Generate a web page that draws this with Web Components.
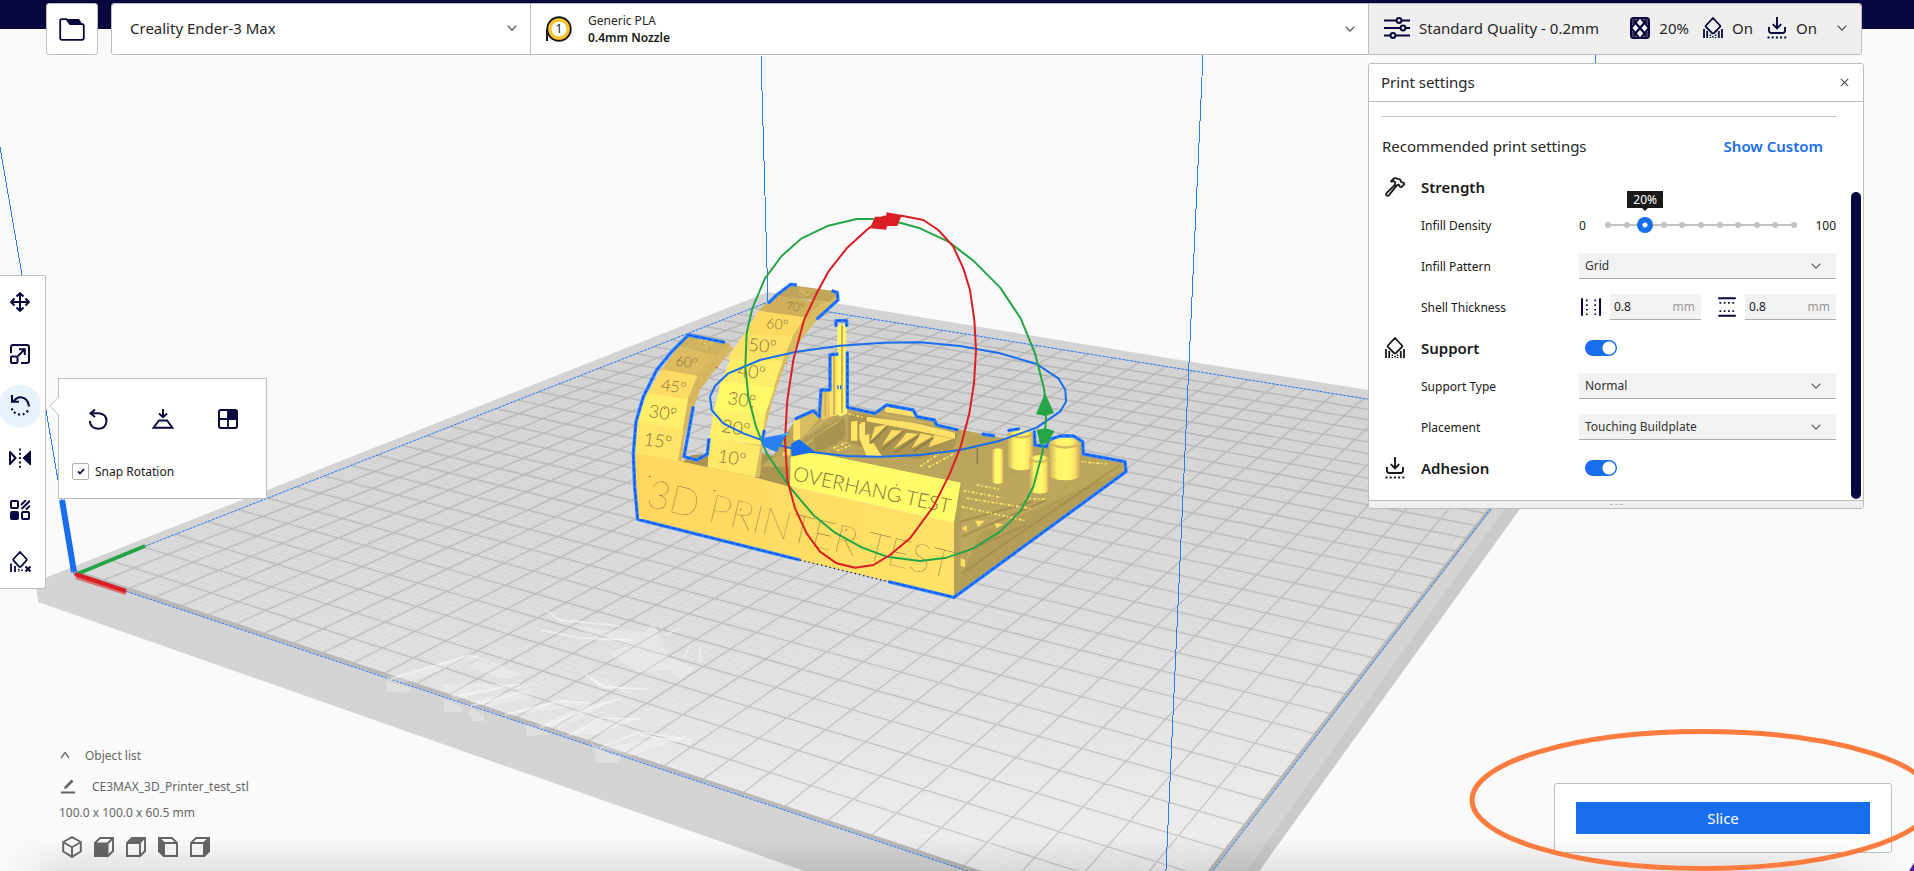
<!DOCTYPE html>
<html lang="en">
<head>
<meta charset="utf-8">
<title>Print preparation</title>
<style>
  html, body { margin: 0; height: 100%; }
  body {
    font: 12px/17px "Noto Sans", "Open Sans", sans-serif;
    color: #191919;
    background: #fafafa;
    --navy: #08073f;
    --blue: #196ef0;
    --line: #bdbdbd;
    --field: #f2f2f2;
  }
</style>
</head>
<body>
<slicer-app></slicer-app>

<script>
const define = (name, html, setup) => {
  const template = document.createElement('template');
  template.innerHTML = html;
  customElements.define(name, class extends HTMLElement {
    constructor() {
      super();
      this.attachShadow({ mode: 'open' }).append(template.content.cloneNode(true));
    }
    connectedCallback() { if (setup) setup.call(this, this.shadowRoot); }
  });
};

/* ---------- icons: [viewBox width, viewBox height, markup] ---------- */
const supportIcon = `<path d="M10 1 L17 8.5 Q17.6 9.3 17 10 L11 16 Q10 16.8 9 16 L3 10 Q2.4 9.3 3 8.5Z" stroke-width="1.8"/><path d="M1 12V21M4.200 14V21M15.800 14V21M19 12V21" stroke-width="1.8"/><path d="M7.400 17.500V21M10 19V21M12.600 17.500V21" stroke-width="1.600" stroke-dasharray="1.500 1"/>`;
const ICONS = {
  chevron: [10, 6, `<path d="M.7.7 5 5.200 9.300.7" stroke-width="1.100"/>`],
  up: [10, 8, `<path d="M1 7 5 1.500 9 7" stroke-width="1.300"/>`],
  close: [9, 9, `<path d="M.8.8l7.400 7.400M8.200.8.8 8.200" stroke-width="1.200"/>`],
  folder: [26, 23, `<path d="M1.200 20V3Q1.200 1.200 3 1.200H7.500L11 6H22.500Q24.800 6 24.800 8.200V19.800Q24.800 21.800 22.800 21.800H3.200Q1.200 21.800 1.200 20Z" stroke-width="1.800"/><path d="M8 1.500H20L22.500 5.800H11.500Z" fill="currentColor" stroke-width="1"/>`],
  spool: [26, 26, `<path d="M1 25V13" stroke="#191919" stroke-width="2"/><circle cx="13" cy="13" r="10.400" stroke="#191919" stroke-width="4.600" fill="#fff"/><circle cx="13" cy="13" r="9.200" stroke="#fdc52b" stroke-width="3.200"/>`],
  sliders: [26, 22, `<g stroke-width="2"><path d="M0 3.500H12M18 3.500H26M0 11H16M22 11H26M0 18.500H6M12 18.500H26"/><circle cx="15" cy="3.500" r="2.400"/><circle cx="19" cy="11" r="2.400"/><circle cx="9" cy="18.500" r="2.400"/></g>`],
  infill: [20, 22, `<rect x="1" y="1" width="18" height="20" rx="2.500" stroke-width="2"/><path d="M4 4 16 18M16 4 4 18M10 0 1 11 10 22M10 0 19 11 10 22" stroke-width="2.200"/><path d="M1 1h5v4l-5 3zM19 1h-5v4l5 3zM1 21h5v-4l-5-3zM19 21h-5v-4l5-3z" fill="currentColor" fill-opacity=".75" stroke="none"/>`],
  support: [20, 22, supportIcon],
  adhesion: [20, 22, `<g stroke-width="1.900"><path d="M10 0V11M5.800 7.200 10 11.400 14.200 7.200"/><path d="M2 10V13.500Q2 16 4.500 16H15.500Q18 16 18 13.500V10"/></g><path d="M.5 20.500H20" stroke-width="1.800" stroke-dasharray="2 2.200"/>`],
  hammer: [20, 20, `<g stroke-width="1.800" stroke-linejoin="round"><path d="M6 4.500Q8 1.300 10.200 1L15.200 2.600 16.200 5 19 6.200 19.100 7.600 16.400 10.200 15 9.800 13.600 7.600 11.800 8.400 3.800 18.400Q2.600 19.400 1.600 18.400 .6 17.300 1.500 16.200L9.900 7.800 10.200 5.200 8.600 4.200Z"/></g>`],
  walls: [20, 18, `<path d="M1 1V17M19 1V17" stroke-width="2" stroke-linecap="round"/><path d="M5.800 1.500V17M14.200 1.500V17" stroke-width="1.700" stroke-dasharray="1.700 3"/>`],
  topbottom: [18, 20, `<path d="M1 1.200H17M1 18.800H17" stroke-width="2" stroke-linecap="round"/><path d="M1.500 5.800H17M1.500 14.200H17" stroke-width="1.700" stroke-dasharray="1.700 2.600"/>`],
  move: [20, 20, `<g stroke-width="2"><path d="M10 1V19M1 10H19M6.500 4.500 10 1.200 13.500 4.500M6.500 15.500 10 18.800 13.500 15.500M4.500 6.500 1.200 10 4.500 13.500M15.500 6.500 18.800 10 15.500 13.500"/></g>`],
  scale: [20, 20, `<g stroke-width="2"><path d="M1 9V3Q1 1 3 1H17Q19 1 19 3V17Q19 19 17 19H11"/><rect x="1" y="12.500" width="6.500" height="6.500" rx="1"/><path d="M8 12 14.500 5.500M9 5.200H14.800V11"/></g>`],
  rotate: [20, 21, `<path d="M3.500 6.500Q6.500 2 11 2.200 18 3 19 11.500" stroke-width="2.100"/><path d="M2 0V6.800H9" stroke-width="2.100"/><path d="M18 15.500Q14 20.500 9 19.500 2.500 18.500 1 11" stroke-width="2.100" stroke-dasharray="2 2.600"/>`],
  mirror: [22, 20, `<path d="M1 4 6.500 10 1 16Z" stroke-width="2" stroke-linejoin="round"/><path d="M21.500 3V17L14 10Z" fill="currentColor" stroke="currentColor" stroke-width="1"/><path d="M11 .5V20" stroke-width="1.900" stroke-dasharray="2 2.300"/>`],
  mesh: [20, 20, `<g stroke-width="2"><rect x="1" y="1" width="7" height="7" rx="1"/><rect x="12" y="12" width="7" height="7" rx="1"/><rect x="1" y="12" width="7" height="7" rx="1" fill="currentColor"/><path d="M11 5 16 0M11.500 9 20 .8M16 9.500 20 5.600"/></g>`],
  blocker: [21, 21, `<path d="M10 1 16.500 8 Q17 8.800 16.500 9.400L11 15.500Q10 16.300 9 15.500L3.500 9.400Q3 8.800 3.500 8Z" stroke-width="1.800"/><path d="M1 12.500V21M5 15V21" stroke-width="1.800"/><path d="M8.800 18V21M12 18.500V21" stroke-width="1.700" stroke-dasharray="1.500 1"/><path d="M15.500 15.500 20.500 20.500M20.500 15.500 15.500 20.500" stroke-width="2.200"/>`],
  reset: [20, 21, `<g stroke-width="2"><path d="M1.800 4.200H11Q18.500 5 18.500 12 17.800 19.800 10 19.800 2.500 19.500 1.800 12"/><path d="M7 .6 2.600 4.300 7 8"/></g>`],
  flatten: [22, 20, `<g stroke-width="1.900"><path d="M11 0V8M7 4.500 11 8.300 15 4.500M7 11.500H15L20.500 18.800H1.500Z"/></g>`],
  face: [20, 20, `<rect x="1" y="1" width="18" height="18" rx="2" stroke-width="2"/><path d="M10 1V19M1 10H19" stroke-width="1.800"/><path d="M10 1H18L19 2V10H10Z" fill="currentColor"/>`],
  pencil: [16, 15, `<path d="M1 13.500H15" stroke-width="2"/><path d="M4 10 4.700 7.400 11.500.6 13.500 2.600 6.700 9.300Z" fill="currentColor" stroke="none"/>`],
  cube: [20, 22, `<path d="M10 1.200 18.800 6V15.500L10 20.800 1.200 15.500V6ZM1.500 6.300 10 11.200 18.500 6.300M10 11.200V20.500" stroke-width="1.900"/>`],
  front: [20, 20, `<path d="M1 6 6 1H19V14L14 19H1Z" stroke-width="1.900"/><path d="M1 6H14V19H1Z" fill="currentColor"/><path d="M14 6 19 1" stroke-width="1.900"/>`],
  top: [20, 20, `<path d="M1 6 6 1H19V14L14 19H1ZM14 6V19" stroke-width="1.900"/><path d="M1 6.500 6 1H19L14 6.500Z" fill="currentColor"/>`],
  left: [20, 20, `<path d="M1 1H14L19 6V19H6L1 14ZM6 6H19" stroke-width="1.900"/><path d="M1 1 6 6V19L1 14Z" fill="currentColor" stroke-width="1.900"/>`],
  right: [20, 20, `<path d="M1 6 6 1H19V14L14 19H1ZM1 6H14" stroke-width="1.900"/><path d="M14 6 19 1V14L14 19Z" fill="currentColor" stroke-width="1.900"/>`]
};

define('ui-icon', `<style>
  :host { display: inline-flex; flex: none; color: var(--navy); }
  svg { display: block; fill: none; stroke: currentColor; }
</style>`, function (root) {
  const [w, h, markup] = ICONS[this.getAttribute('name')];
  root.innerHTML += `<svg width="${w}" height="${h}" viewBox="0 0 ${w} ${h}" aria-hidden="true">${markup}</svg>`;
});

/* ---------- top bar ---------- */
define('top-bar', `<style>
  :host { display: flex; gap: 13px; padding: 3px 52px 0 46px; background: linear-gradient(var(--navy) 29px, transparent 29px); }
  button { font: inherit; color: inherit; box-sizing: border-box; margin: 0; cursor: pointer; text-align: left; }
  .open { width: 52px; height: 52px; padding: 0; display: grid; place-items: center; background: #fff; border: 1px solid var(--line); border-radius: 3px; }
  .bar { flex: 1; display: grid; grid-template-columns: minmax(0, 1fr) minmax(0, 2fr) 492px; height: 52px; box-sizing: border-box; border: 1px solid var(--line); border-radius: 3px; overflow: hidden; }
  .bar button { display: flex; align-items: center; background: #fff; border: 0; border-right: 1px solid var(--line); padding: 0 13px 2px 18px; font-size: 15px; line-height: 20px; color: #262626; }
  .bar .quality { background: #efefef; border-right: 0; padding: 0 14px 2px 15px; gap: 9px; }
  .bar .material { gap: 16px; padding-left: 15px; padding-bottom: 1px; }
  .material .lines { display: grid; font-size: 12px; line-height: 17px; }
  strong { font-weight: 600; color: #191919; }
  .grow { flex: 1; }
  .arrow { color: #444; }
  .spool { display: grid; place-items: center; font-size: 12px; line-height: 17px; color: #191919; }
  .spool > * { grid-area: 1 / 1; }
  .spool span { position: relative; }
  .stat { display: flex; align-items: center; gap: 9px; margin-right: 5px; }
  .stat.last { margin-right: 11px; }
</style>
<button class="open" aria-label="Open file"><ui-icon name="folder"></ui-icon></button>
<div class="bar">
  <button><span>Creality Ender-3 Max</span><span class="grow"></span><ui-icon class="arrow" name="chevron"></ui-icon></button>
  <button class="material">
    <span class="spool"><ui-icon name="spool"></ui-icon><span>1</span></span>
    <span class="lines"><span>Generic PLA</span><strong>0.4mm Nozzle</strong></span>
    <span class="grow"></span><ui-icon class="arrow" name="chevron"></ui-icon>
  </button>
  <button class="quality">
    <ui-icon name="sliders"></ui-icon><span>Standard Quality - 0.2mm</span><span class="grow"></span>
    <span class="stat"><ui-icon name="infill"></ui-icon>20%</span>
    <span class="stat"><ui-icon name="support"></ui-icon>On</span>
    <span class="stat last"><ui-icon name="adhesion"></ui-icon>On</span>
    <ui-icon class="arrow" name="chevron"></ui-icon>
  </button>
</div>`);

/* ---------- print settings panel ---------- */
define('setting-row', `<style>
  :host { display: grid; grid-template-columns: 39px 158px minmax(0, 1fr); align-items: center; height: 26px; margin-bottom: 15px; }
  :host([heading]) { margin-bottom: 12px; font-size: 15px; font-weight: 600; }
  .icon { padding-left: 3px; display: flex; }
</style><span class="icon"><slot name="icon"></slot></span><slot name="label"></slot><slot></slot>`);

define('print-panel', `<style>
  :host { display: block; box-sizing: border-box; width: 496px; background: #fff; border: 1px solid var(--line); border-radius: 3px; overflow: hidden; }
  header { display: flex; align-items: center; justify-content: space-between; box-sizing: border-box; height: 38px; padding: 0 14px 1px 12px; border-bottom: 1px solid var(--line); }
  h2, h3 { margin: 0; font-size: 15px; line-height: 20px; font-weight: 400; color: #262626; }
  button { border: 0; background: none; padding: 0; font: inherit; cursor: pointer; }
  .close ui-icon { color: #555; }
  .body { display: flex; }
  .content { flex: 1; min-width: 0; padding: 14px 15px 7px 13px; }
  .rule { height: 1px; background: var(--line); margin-bottom: 16px; }
  .intro { display: flex; justify-content: space-between; align-items: center; height: 26px; padding-right: 13px; margin-bottom: 15px; }
  .intro a { font-size: 15px; font-weight: 600; color: var(--blue); text-decoration: none; }
  .track { display: grid; width: 10px; padding: 90px 2px 1px 0; }
  .thumb { border-radius: 5px; background: var(--navy); }
  setting-row ui-icon[slot] { color: #191919; }
  .select { display: grid; align-items: center; }
  .select > * { grid-area: 1 / 1; }
  .select ui-icon { justify-self: end; margin-right: 15px; color: #555; pointer-events: none; }
  select { appearance: none; width: 100%; height: 26px; border: 0; border-bottom: 1px solid #adadad; border-radius: 0; background: var(--field); padding: 0 6px; font: inherit; color: #333; }
  .switch { appearance: none; width: 32px; height: 16px; margin: 0 0 0 6px; border-radius: 8px; background: radial-gradient(circle at 24px 8px, #fff 6px, transparent 7px) var(--blue); }
  .slider { display: grid; grid-template-columns: 21px minmax(0, 1fr) 34px; align-items: center; }
  .slider span:last-child { text-align: right; }
  .range { display: grid; align-items: center; position: relative; }
  .range > input, .range > .ticks { grid-area: 1 / 1; }
  .ticks { margin: 0 5px; display: flex; justify-content: space-between; background: linear-gradient(#c0c2c4, #c0c2c4) center / 100% 2px no-repeat; }
  .ticks i { width: 6px; height: 6px; border-radius: 3px; background: #c0c2c4; }
  .range input { appearance: none; margin: 0; width: 100%; height: 18px; background: none; }
  .range input::-webkit-slider-thumb { appearance: none; width: 16px; height: 16px; border-radius: 8px; background: radial-gradient(circle, #fff 2px, var(--blue) 3px); }
  output { position: absolute; left: calc(8px + (100% - 16px) * .2); bottom: 26px; translate: -50%; width: 36px; text-align: center; background: #191919; color: #fff; }
  output::after { content: ""; position: absolute; left: 15px; top: 100%; border: 3px solid transparent; border-top-color: #191919; }
  .shell { display: grid; grid-template-columns: 31px 91px 44px 91px; align-items: center; }
  .shell ui-icon { justify-self: end; margin-right: 9px; }
  .field { display: flex; align-items: center; box-sizing: border-box; height: 26px; background: var(--field); border-bottom: 1px solid #adadad; padding: 0 6px 0 4px; color: #999; }
  .field input { flex: 1; min-width: 0; border: 0; padding: 0; background: none; font: inherit; color: #191919; }
  footer { height: 7px; border-top: 1px solid var(--line); background: #efefef; display: flex; justify-content: center; align-items: center; gap: 2px; }
  footer i { width: 3px; height: 1px; background: #bbb; }
</style>
<header><h2>Print settings</h2><button class="close" aria-label="Close"><ui-icon name="close"></ui-icon></button></header>
<div class="body">
  <div class="content">
    <div class="rule"></div>
    <div class="intro"><h3>Recommended print settings</h3><a href="#custom">Show Custom</a></div>
    <setting-row heading><ui-icon slot="icon" name="hammer"></ui-icon><span slot="label">Strength</span></setting-row>
    <setting-row><label slot="label" for="density">Infill Density</label>
      <div class="slider"><span>0</span>
        <div class="range"><div class="ticks"><i></i><i></i><i></i><i></i><i></i><i></i><i></i><i></i><i></i><i></i><i></i></div>
          <input id="density" type="range" min="0" max="100" value="20"><output for="density">20%</output></div>
        <span>100</span></div></setting-row>
    <setting-row><label slot="label" for="pattern">Infill Pattern</label>
      <div class="select"><select id="pattern"><option>Grid</option></select><ui-icon name="chevron"></ui-icon></div></setting-row>
    <setting-row><label slot="label" for="wall">Shell Thickness</label>
      <div class="shell"><ui-icon name="walls"></ui-icon><div class="field"><input id="wall" value="0.8"><span>mm</span></div>
        <ui-icon name="topbottom"></ui-icon><div class="field"><input aria-label="Top and bottom thickness" value="0.8"><span>mm</span></div></div></setting-row>
    <setting-row heading><ui-icon slot="icon" name="support"></ui-icon><label slot="label" for="support">Support</label><input class="switch" id="support" type="checkbox" checked></setting-row>
    <setting-row><label slot="label" for="type">Support Type</label>
      <div class="select"><select id="type"><option>Normal</option></select><ui-icon name="chevron"></ui-icon></div></setting-row>
    <setting-row><label slot="label" for="placement">Placement</label>
      <div class="select"><select id="placement"><option>Touching Buildplate</option></select><ui-icon name="chevron"></ui-icon></div></setting-row>
    <setting-row heading><ui-icon slot="icon" name="adhesion"></ui-icon><label slot="label" for="adhesion">Adhesion</label><input class="switch" id="adhesion" type="checkbox" checked></setting-row>
  </div>
  <div class="track"><div class="thumb"></div></div>
</div>
<footer><i></i><i></i><i></i></footer>`);

/* ---------- left toolbar and rotate popover ---------- */
define('tool-bar', `<style>
  :host { display: flex; flex-direction: column; box-sizing: border-box; width: 46px; background: #fff; border: 1px solid var(--line); border-left: 0; border-radius: 0 3px 3px 0; padding-right: 5px; overflow: hidden; }
  button { height: 52px; padding: 0 0 1px; border: 0; background: none; display: grid; place-items: center; cursor: pointer; }
  button[aria-pressed=true] { background: radial-gradient(circle, #e6f2fc 21px, transparent 22px); }
</style>
<button aria-label="Move"><ui-icon name="move"></ui-icon></button>
<button aria-label="Scale"><ui-icon name="scale"></ui-icon></button>
<button aria-label="Rotate" aria-pressed="true"><ui-icon name="rotate"></ui-icon></button>
<button aria-label="Mirror"><ui-icon name="mirror"></ui-icon></button>
<button aria-label="Per model settings"><ui-icon name="mesh"></ui-icon></button>
<button aria-label="Support blocker"><ui-icon name="blocker"></ui-icon></button>`);

define('rotate-popover', `<style>
  :host { display: block; position: relative; box-sizing: border-box; width: 209px; height: 121px; padding: 29px 13px 0; background: #fff; border: 1px solid var(--line); }
  .arrow { position: absolute; left: -10px; top: 17px; }
  .tools { display: flex; justify-content: space-around; margin: 0 -7px; }
  .tools button { width: 22px; height: 22px; padding: 0; border: 0; background: none; display: grid; place-items: center; cursor: pointer; }
  label { display: flex; align-items: center; gap: 6px; margin-top: 33px; }
  .box { display: grid; place-items: center; width: 17px; height: 17px; }
  .box > * { grid-area: 1 / 1; }
  input { appearance: none; width: 17px; height: 17px; margin: 0; border: 1px solid #b0b0b0; border-radius: 2px; background: #fff; }
  svg { fill: none; pointer-events: none; }
</style>
<svg class="arrow" width="11" height="20" viewBox="0 0 11 20"><path d="M11 0 .8 10 11 20Z" fill="#fff"/><path d="M10 .5.8 10 10 19.500" stroke="#bdbdbd"/></svg>
<div class="tools">
  <button aria-label="Reset"><ui-icon name="reset"></ui-icon></button>
  <button aria-label="Lay flat"><ui-icon name="flatten"></ui-icon></button>
  <button aria-label="Select face"><ui-icon name="face"></ui-icon></button>
</div>
<label><span class="box"><input type="checkbox" checked><svg width="8" height="7" viewBox="0 0 8 7"><path d="M1 3.300 3 5.500 7 1" stroke="#08073f" stroke-width="1.800"/></svg></span>Snap Rotation</label>`);

/* ---------- object list ---------- */
define('object-list', `<style>
  :host { display: block; color: #666; }
  ui-icon { color: #666; }
  .head, .item, .views { display: flex; align-items: center; }
  button { display: flex; align-items: center; padding: 0; border: 0; background: none; font: inherit; color: inherit; cursor: pointer; }
  .head { height: 18px; margin: 0 0 14px 1px; }
  .head button { gap: 15px; }
  .item { gap: 16px; height: 17px; margin: 0 0 9px 1px; }
  .views { gap: 10px; margin-top: 15px; padding-left: 2px; }
  .views button { width: 22px; height: 22px; justify-content: center; }
</style>
<div class="head"><button aria-expanded="false"><ui-icon name="up"></ui-icon>Object list</button></div>
<div class="item"><ui-icon name="pencil"></ui-icon><span>CE3MAX_3D_Printer_test_stl</span></div>
<div>100.0 x 100.0 x 60.5 mm</div>
<div class="views">
  <button aria-label="3D view"><ui-icon name="cube"></ui-icon></button>
  <button aria-label="Front view"><ui-icon name="front"></ui-icon></button>
  <button aria-label="Top view"><ui-icon name="top"></ui-icon></button>
  <button aria-label="Left view"><ui-icon name="left"></ui-icon></button>
  <button aria-label="Right view"><ui-icon name="right"></ui-icon></button>
</div>`);

/* ---------- slice action ---------- */
define('slice-card', `<style>
  :host { display: block; position: relative; box-sizing: border-box; width: 338px; padding: 18px 21px; background: #fff; border: 1px solid var(--line); border-radius: 3px; }
  button { display: block; width: 100%; height: 32px; border: 0; background: var(--blue); color: #fff; font: inherit; font-size: 15px; cursor: pointer; }
  svg { position: absolute; left: -86px; top: -56px; pointer-events: none; overflow: visible; z-index: 3; }
</style>
<button>Slice</button>
<svg width="468" height="144" viewBox="0 0 468 144"><ellipse cx="234" cy="72" rx="231" ry="68.500" fill="none" stroke="#ff7c40" stroke-width="5"/></svg>`);

/* ---------- 3D view ---------- */
define('build-scene', `<style>
  :host { display: block; }
  svg { display: block; width: 100%; height: 100%; }
  .plate { stroke: #8a8a8a; stroke-opacity: .38; stroke-width: 1.300; fill: none; }
  .fine { stroke: #fff; stroke-opacity: .14; stroke-width: 1; fill: none; }
  .vol { stroke: #2b7ff5; stroke-width: 1; fill: none; shape-rendering: crispEdges; }
  .edge { stroke: #2b7cf2; stroke-width: 1; stroke-dasharray: 3 1; fill: none; }
  .ring { fill: none; stroke-width: 6; stroke-linejoin: round; }
  .glow { fill: none; stroke: #2b80ff; stroke-width: 10; stroke-linejoin: round; }
  .core { fill: none; stroke: #0a41f5; stroke-width: 3; stroke-dasharray: 14 6; stroke-linejoin: round; }
  .cut { font-family: Lato, "Noto Sans", sans-serif; font-weight: 300; fill: #8a753c; }
  .cut .faint { font-weight: 100; fill: #7a6630; }
  .ghost path { fill: #fff; fill-opacity: .26; }
  .ghost .thin { fill: none; stroke: #fff; stroke-opacity: .55; stroke-width: 1.300; }
</style>
<svg viewBox="0 0 1914 871" preserveAspectRatio="xMidYMid slice">
  <defs>
    <linearGradient id="bed" gradientUnits="userSpaceOnUse" x1="0" y1="300" x2="0" y2="871"><stop offset="0" stop-color="#cbcbcb"/><stop offset=".5" stop-color="#d9d9d9"/><stop offset="1" stop-color="#efefef"/></linearGradient>
    <linearGradient id="cyl"><stop offset="0" stop-color="#c9ad5c"/><stop offset=".25" stop-color="#fff36a"/><stop offset=".6" stop-color="#fffa6c"/><stop offset=".8" stop-color="#ffdf64"/><stop offset="1" stop-color="#b39c58"/></linearGradient>
    <linearGradient id="frontface" x1="0" y1="0" x2="1" y2="0"><stop offset="0" stop-color="#ffd760"/><stop offset="1" stop-color="#ffe267"/></linearGradient>
  </defs>
  <path d="M36 586 47 577 768 292 1180 360 1581 424 1200 953 810 873 38 602Z" fill="#d4d4d4"/>
  <path d="M1581 424 1200 953 1188 953 1565 424Z" fill="#cbcbcb"/>
  <path d="M74 574 1163 936 1552 429 768 302Z" fill="url(#bed)"/>
  <path class="fine"/><path class="plate"/>
  <path d="M1162 933 1551 430M76 572 1162 933" stroke="#b9b9b9" stroke-width="4" fill="none"/>
  <path class="edge" d="M74 574 768 302 1552 429 1163 936Z"/>

  <g class="ghost">
    <path d="M385 678 470 655 478 657 405 683ZM440 684 520 684 455 700ZM476 661 524 674 505 680 470 668ZM470 702 538 684 500 688 538 694 490 707ZM500 714 560 700 590 705 530 712ZM535 726 585 706 622 698 590 712 560 728ZM565 736 600 720 640 718 600 734ZM600 748 650 740 690 736 630 756Z"/>
    <path d="M386 681 386 692 410 693 410 688ZM444 700 444 712 462 712 462 706ZM468 708 472 721 484 721 484 714ZM525 724 527 736 552 734ZM590 742 597 754 612 755ZM594 750 596 763 618 763 622 756Z"/>
    <path d="M545 612 565 624 610 630 646 632 653 622 662 640 668 657 695 668 680 680 670 670 640 672 615 658 608 652 630 646 600 640Z"/>
    <path d="M585 674 610 686 650 690 600 689Z"/>
    <path class="thin" d="M388 680 470 655 505 668M458 696 520 684M470 706 530 690M505 715 560 701 590 703M540 728 590 708 622 698M570 735 600 718 640 719M547 611 560 620 620 626M541 630 580 638 630 640M665 635 681 628M585 674 604 687 648 689M604 679 612 687M690 645 684 658M699 646 701 662M600 748 640 732 690 740M640 735 690 743"/>
  </g>

  <path class="vol" d="M0 147 22 275M46 410 74 574M761 55 768 302M1203 55 1163 936M1595 55V64"/>
  <path d="M62 500 74 572" stroke="#196ef0" stroke-width="6"/>
  <path d="M77 574 145 546" stroke="#25a548" stroke-width="4"/>
  <path d="M76 577 126 593" stroke="#d97070" stroke-width="4"/>
  <path d="M75 574 126 591" stroke="#dc1d24" stroke-width="4"/>

  <g transform="translate(600 200) scale(.333333)">
    <path d="M480 832 585 660 650 632 745 625 820 640 860 612 940 630 950 650 1003 660 1010 675 1150 702 1572 785 1578 815 1062 1188 1060 900Z" fill="#bba45b"/>
    <path d="M1082 848 1572 785 1578 815 1062 1188Z" fill="#bda75c"/>
    <path d="M1140 1000 1575 810 1062 1185Z" fill="#b39d57"/>
    <path d="M1082 848 1062 968V1188L1082 1168Z" fill="#b5a05a"/>
    <path d="M1080 965 1300 905M1085 1010 1340 900M1085 1060 1280 975M1085 1120 1560 795" stroke="#a8914f" stroke-width="6"/>
    <path d="M1125 962 1155 962 1135 980ZM1184 970 1210 972 1190 985ZM1082 1075 1095 1080V1100L1082 1098ZM1085 985 1100 975 1100 995Z" fill="#ffe366"/>
    <!-- frame on the left of the top plate -->
    <path d="M582 662 650 636 662 650 600 722 582 725Z" fill="#d9bd61"/>
    <path d="M600 722 722 650 735 660V715L640 770H570Z" fill="#b19b56"/>
    <path d="M600 715 690 650M615 735 715 665" stroke="#cdb25f" stroke-width="6"/>
    <path d="M735 715 735 655 640 715 650 755Z" fill="#a9934f"/>
    <path d="M580 665 600 658V720H580ZM548 760 570 740V785H548Z" fill="#ffe366"/>
    <!-- comb with its slats -->
    <path d="M745 640 800 645 1075 700 1060 745 960 775 850 768 745 725Z" fill="#ab9551"/>
    <path d="M855 620 945 632V650L855 636ZM800 650 940 668 1065 698V716L950 692 800 664Z" fill="#ffe167"/>
    <path d="M820 640 1000 672" stroke="#c9ae5e" stroke-width="6"/>
    <path d="M753 665 772 662V722H753ZM778 668 795 665 795 705 808 702V732L820 728 845 768H800L778 715Z" fill="#ffe668"/>
    <path d="M825 680 862 674 812 722ZM875 690 908 692 845 738ZM920 698 955 702 880 748ZM962 700 1000 708 935 745ZM1003 705 1060 716 985 742Z" fill="#fbdc64"/>
    <path d="M862 680 812 730M908 698 848 748M955 708 885 758M1000 714 940 754" stroke="#8f7d46" stroke-width="5"/>
    <path d="M700 745 745 725M710 752 755 735M745 642 790 652M960 800 1030 752M985 802 1060 762M1090 872 1200 892M1100 895 1290 925M1085 920 1280 963M1130 855 1200 868M1275 895 1340 898M1440 785 1520 792" stroke="#ffe76a" stroke-width="5" stroke-dasharray="9 5 4 7"/>
    <path d="M660 570H692V650L665 660Z" fill="#e6c962"/><path d="M686 468H715V645L690 650Z" fill="#ffe067"/><path d="M712 375 738 372 742 640 720 650 712 640Z" fill="#fff56a"/><path d="M726 375V640M702 470V645M676 575V650" stroke="#d1b35d" stroke-width="6"/>
    <path d="M714 556V568M722 556V568" stroke="#196ef0" stroke-width="4"/>
    <!-- cylinders -->
    <g fill="url(#cyl)"><path d="M1223 700Q1263 680 1303 700V800Q1263 822 1223 800Z"/><path d="M1176 750Q1194 740 1212 750V845Q1194 858 1176 845Z"/><path d="M1347 722Q1395 705 1444 722V830Q1395 852 1347 830Z"/><path d="M1289 775Q1319 755 1349 775V873Q1319 890 1289 873Z"/></g>
    <path d="M1223 702Q1263 722 1303 702M1347 730Q1395 755 1444 730M1289 778Q1319 794 1349 778" fill="none" stroke="#d6b95f" stroke-width="7"/>
    <path d="M1132 745V792" stroke="#8e7b45" stroke-width="4"/>
    <!-- front faces -->
    <path d="M103 760 248 780 323 800 465 832 570 858 1062 968V1190L600 1080 113 958Z" fill="url(#frontface)"/>
    <path d="M248 785 275 765 323 762 480 760 560 775 580 800 575 862 465 832 323 802Z" fill="#ab9551"/>
    <path d="M480 800 520 770 575 765 572 800Z" fill="#c2aa5c"/>
    <path d="M572 770 640 757 1082 848 1062 968 570 858Z" fill="#fffb69"/>
    <!-- lower arch -->
    <path d="M375 427 400 445 345 510 300 570 275 640 252 720 245 785 232 780 225 640 260 500 330 440Z" fill="#d6b75f"/>
    <path d="M262 405 375 427 392 432 345 467 243 440 215 450Z" fill="#cfb25d"/>
    <path d="M235 440 345 465 285 530 185 508Z" fill="#ddbb5f"/>
    <path d="M185 508 292 528 262 600 140 585Z" fill="#fddb64"/>
    <path d="M140 580 264 598 248 690 112 668Z" fill="#ffee69"/>
    <path d="M112 665 250 690 234 782 103 760Z" fill="#ffe467"/>
    <!-- upper arch -->
    <path d="M690 275 715 290 680 340 650 360 610 410 560 480 520 590 492 700 480 830 465 832 440 700 480 460 600 320Z" fill="#d9bb60"/>
    <path d="M572 255 695 272 712 280 690 305 640 300 525 290Z" fill="#bfa45a"/>
    <path d="M525 285 665 308 612 355 475 332Z" fill="#d0af5b"/>
    <path d="M475 332 615 352 575 412 435 400Z" fill="#fdd962"/>
    <path d="M435 398 578 410 545 490 380 478Z" fill="#ffe266"/>
    <path d="M392 475 548 486 522 560 362 548Z" fill="#ffec68"/>
    <path d="M362 545 525 560 495 645 342 632Z" fill="#fff96a"/>
    <path d="M342 630 497 645 482 735 328 716Z" fill="#fff069"/>
    <path d="M328 714 482 738 465 832 323 802Z" fill="#ffe768"/>
    <!-- selection outline -->
    <g id="outline"></g>
    <path d="M600 1080 865 1145" stroke="#0a1a66" stroke-width="4" stroke-dasharray="4 9"/>
    <path d="M205 555h4M192 625h4M215 640h4M147 830h4M342 872h4M420 928h4M400 580h4M455 620h4M725 838h4M888 855h4M900 900h4M736 990h4M348 502h4M558 490h4M778 670h4M905 695h4" stroke="#f01818" stroke-width="3"/>
  </g>

  <g class="cut">
    <g class="faint" transform="translate(645 506) rotate(13.500)"><text font-size="39">3D PRINTER TEST</text></g>
    <g transform="translate(792 480) rotate(12)"><text font-size="20">OVERHANG TEST</text></g>
    <g font-size="18" text-anchor="middle">
      <text transform="translate(657 447) rotate(8)">15º</text>
      <text transform="translate(662 419) rotate(8)">30º</text>
      <text transform="translate(673 392) rotate(8)" font-size="16">45º</text>
      <text transform="translate(686 367) rotate(8)" font-size="14">60º</text>
      <text transform="translate(704 348) rotate(8)" font-size="11" fill="#f0d564">75º</text>
      <text transform="translate(731 464) rotate(9)">10º</text>
      <text transform="translate(735 434) rotate(9)">20º</text>
      <text transform="translate(741 406) rotate(8)">30º</text>
      <text transform="translate(751 378) rotate(6)">40º</text>
      <text transform="translate(762 352) rotate(5)">50º</text>
      <text transform="translate(777 329) rotate(5)" font-size="14">60º</text>
      <text transform="translate(795 311) rotate(5)" font-size="12">70º</text>
      <text transform="translate(806 296) rotate(5)" font-size="10" fill="#f0d564">80º</text>
    </g>
  </g>

  <!-- rotation gizmo -->
  <g transform="translate(600 200) scale(.333333)">
    <path class="ring" stroke="#196ef0" d="M960 427 850 428 720 437 590 455 480 480 385 520 345 558 330 590 335 630 370 670 430 700 490 722 560 742 640 757 740 768 840 770 960 765 1080 750 1200 722 1310 683 1380 635 1398 605 1396 570 1375 535 1310 492 1200 460 1080 438Z"/>
    <path class="ring" stroke="#25a548" d="M815 57 770 57 685 77 605 115 545 168 495 235 457 325 440 400 436 500 445 590 468 680 500 760 568 860 640 945 705 998 785 1042 860 1070 960 1083 1040 1073 1120 1045 1200 995 1260 935 1300 860 1328 755 1338 660 1333 570 1305 460 1262 355 1200 262 1120 182 1045 125 955 83 900 68Z"/>
    <path class="ring" stroke="#dc1d24" d="M850 50 905 47 970 60 1015 90 1060 140 1090 205 1110 270 1123 360 1128 450 1122 550 1108 640 1082 740 1050 820 1000 920 930 1015 870 1065 820 1095 765 1103 710 1090 660 1055 620 1000 585 925 562 840 555 720 562 600 580 480 612 360 650 280 685 215 740 145 800 90Z"/>
    <path d="M810 85 825 50 858 50 860 37 905 45 892 78 862 78 858 89Z" fill="#dc1d24"/>
    <path d="M483 715 562 700 530 757 488 738Z" fill="#2a80f2"/><path d="M573 732 597 718 645 755 575 769Z" fill="#196ef0"/>
    <path d="M545 707 565 698" stroke="#36b4ff" stroke-width="6"/>
    <path d="M1335 580 1362 638 1338 648 1308 643ZM1310 690 1338 685 1363 693 1345 728 1320 732Z" fill="#25a548"/>
  </g>
</svg>`, function (root) {
  /* perspective mapping of the square bed onto its four screen corners */
  const [[x0, y0], [x1, y1], [x2, y2], [x3, y3]] = [[74, 574], [1163, 936], [1552, 429], [768, 302]];
  const ax = x1 - x2, bx = x3 - x2, cx = x0 - x1 + x2 - x3;
  const ay = y1 - y2, by = y3 - y2, cy = y0 - y1 + y2 - y3;
  const det = ax * by - bx * ay, g = (cx * by - bx * cy) / det, h = (ax * cy - cx * ay) / det;
  const point = (u, v) => {
    const w = g * u + h * v + 1;
    return ((x1 - x0 + g * x1) * u + (x3 - x0 + h * x3) * v + x0) / w + ' ' + ((y1 - y0 + g * y1) * u + (y3 - y0 + h * y3) * v + y0) / w;
  };
  const grid = n => {
    let d = '';
    for (let i = 1; i < n; i++) d += `M${point(i / n, 0)}L${point(i / n, 1)}M${point(0, i / n)}L${point(1, i / n)}`;
    return d;
  };
  root.querySelector('.plate').setAttribute('d', grid(30));
  root.querySelector('.fine').setAttribute('d', grid(150));
  const outline = 'M375 427 265 405 215 455 170 510 130 590 108 665 100 760 104 860 113 958 600 1080M280 620 252 770 290 780 322 762 327 715M505 310 530 285 572 253 590 255M695 272 712 278 714 300 675 335 650 358M585 657 640 632 658 650 663 570 690 570 690 465 715 462M708 380V362H740V380M742 455V622L825 640 860 615 940 630 950 650 1003 660 1010 675 1075 690M1145 702 1185 708M1223 692 1260 686M865 1145 1062 1192 1578 815 1575 785 1450 762 1448 725 1420 708 1380 708 1345 720 1340 740 1305 735 1303 692M493 690 488 715';
  root.querySelector('#outline').innerHTML = `<path class="glow" d="${outline}"/><path class="core" d="${outline}"/>`;
});

/* ---------- application shell ---------- */
define('slicer-app', `<style>
  :host { display: grid; min-height: 100vh; overflow: hidden; }
  .ui, build-scene, .shade, .corner { grid-area: 1 / 1; }
  build-scene { height: 0; min-height: 100%; }
  .ui { position: relative; display: grid; grid-template-rows: auto 1fr; min-width: 0; }
  main { display: flex; justify-content: space-between; min-width: 0; }
  .left, .right { display: flex; flex-direction: column; justify-content: space-between; }
  .left { padding: 220px 0 13px; }
  .tools { display: flex; align-items: flex-start; gap: 12px; }
  rotate-popover { margin-top: 103px; }
  object-list { margin-left: 59px; }
  .right { align-items: flex-end; padding: 8px 22px 18px 0; }
  print-panel { margin-right: 28px; }
  .shade { align-self: end; height: 34px; z-index: 2; pointer-events: none; background: linear-gradient(transparent, rgba(0, 0, 0, .09)); mask-image: linear-gradient(90deg, transparent, #000 70px, #000 calc(100% - 120px), transparent); }
  .corner { align-self: end; justify-self: end; width: 5px; height: 8px; z-index: 2; background: #4a1ba0; clip-path: polygon(100% 0, 100% 100%, 0 100%); }
</style>
<build-scene></build-scene>
<div class="ui">
  <top-bar></top-bar>
  <main>
    <div class="left">
      <div class="tools"><tool-bar></tool-bar><rotate-popover></rotate-popover></div>
      <object-list></object-list>
    </div>
    <div class="right"><print-panel></print-panel><slice-card></slice-card></div>
  </main>
</div>
<div class="shade"></div>
<div class="corner"></div>`);
</script>
</body>
</html>
